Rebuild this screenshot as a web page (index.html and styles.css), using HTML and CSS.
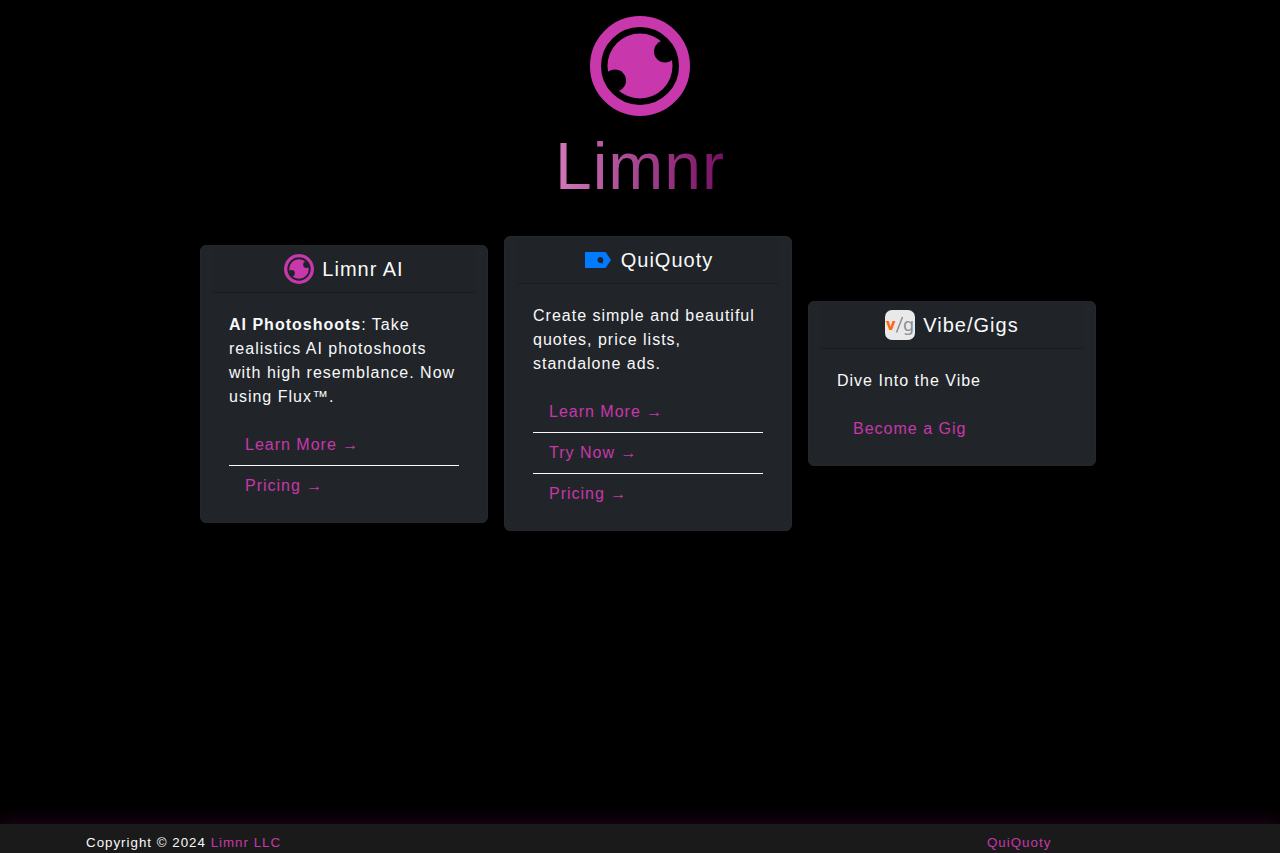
FILE: index.html
```html
<!DOCTYPE html>
<html lang="en">
<head>
    <meta charset="UTF-8">
    <meta name="viewport" content="width=device-width, initial-scale=1.0">
    <title>Limnr</title>
    <link rel="stylesheet" href="styles.css">
</head>
<body>
    <header class="hero">
        <svg class="logo" viewBox="0 0 100 100" aria-hidden="true">
            <defs>
                <mask id="bites">
                    <rect width="100" height="100" fill="#fff"/>
                    <circle cx="75" cy="35.5" r="11" fill="#000"/>
                    <circle cx="25" cy="64.5" r="11" fill="#000"/>
                </mask>
            </defs>
            <circle cx="50" cy="50" r="44.5" fill="none" stroke="#c837ab" stroke-width="11"/>
            <circle cx="50" cy="50" r="32.5" fill="#c837ab" mask="url(#bites)"/>
        </svg>
        <h1>Limnr</h1>
    </header>

    <main class="cards">
        <section class="card">
            <h2 class="card-header">
                <svg class="card-icon" viewBox="0 0 100 100" aria-hidden="true">
                    <circle cx="50" cy="50" r="44.5" fill="none" stroke="#c837ab" stroke-width="11"/>
                    <circle cx="50" cy="50" r="32.5" fill="#c837ab" mask="url(#bites)"/>
                </svg>
                Limnr AI
            </h2>
            <div class="card-body">
                <p><strong>AI Photoshoots</strong>: Take realistics AI photoshoots with high resemblance. Now using Flux™.</p>
                <ul class="links">
                    <li><a href="#">Learn More →</a></li>
                    <li><a href="#">Pricing →</a></li>
                </ul>
            </div>
        </section>

        <section class="card">
            <h2 class="card-header">
                <svg class="card-icon" viewBox="0 0 30 30" aria-hidden="true">
                    <path d="M2 7h20.500l5.500 8-5.500 8H2z" fill="#007bff"/>
                    <path d="M17.500 12a3 3 0 1 0 .8 5.900l1.400 1.200v-2.200a3 3 0 0 0-2.200-4.900z" fill="#212529"/>
                </svg>
                QuiQuoty
            </h2>
            <div class="card-body">
                <p>Create simple and beautiful quotes, price lists, standalone ads.</p>
                <ul class="links">
                    <li><a href="#">Learn More →</a></li>
                    <li><a href="#">Try Now →</a></li>
                    <li><a href="#">Pricing →</a></li>
                </ul>
            </div>
        </section>

        <section class="card">
            <h2 class="card-header">
                <svg class="card-icon" viewBox="0 0 30 30" aria-hidden="true">
                    <rect width="30" height="30" rx="7" fill="#e9e9e9"/>
                    <text class="icon-v" x="1" y="20">v</text>
                    <path d="M17.500 7l-6 15.500" stroke="#868e96" stroke-width="1.500"/>
                    <text class="icon-g" x="18" y="21">g</text>
                </svg>
                Vibe/Gigs
            </h2>
            <div class="card-body">
                <p>Dive Into the Vibe</p>
                <ul class="links">
                    <li><a href="#">Become a Gig</a></li>
                </ul>
            </div>
        </section>
    </main>

    <footer class="footer">
        <div class="footer-inner">
            <div>Copyright © 2024 <a href="#">Limnr LLC</a></div>
            <div><a href="#">QuiQuoty</a></div>
        </div>
    </footer>
</body>
</html>
```
FILE: styles.css
```css
* {
    box-sizing: border-box;
}
body {
    display: flex;
    flex-direction: column;
    min-height: 100vh;
    margin: 0;
    background-color: #000;
    color: #f8f9fa;
    font-family: "Liberation Sans", Arial, sans-serif;
    font-size: 16px;
    line-height: 24px;
    letter-spacing: 1px;
}
a {
    color: #c837ab;
    text-decoration: none;
}
.hero {
    display: flex;
    flex-direction: column;
    align-items: center;
    padding-top: 16px;
}
.logo {
    width: 100px;
    height: 100px;
}
h1 {
    margin: 10px 0 30px;
    font-size: 66px;
    font-weight: 400;
    line-height: 80px;
    background: linear-gradient(to right, #d279bb, #760f62);
    -webkit-background-clip: text;
    background-clip: text;
    color: transparent;
}
.cards {
    display: flex;
    flex-wrap: wrap;
    align-items: center;
    justify-content: center;
    margin-bottom: 16px;
}
.card {
    width: 288px;
    margin-left: 16px;
    padding: 0 12px;
    background-color: #212529;
    border: 1px solid #24282c;
    border-radius: 6px;
}
.card-header {
    display: flex;
    align-items: center;
    justify-content: center;
    gap: 8px;
    margin: 0;
    padding: 8px 16px;
    font-size: 20px;
    font-weight: 400;
    background-color: #202428;
    border-bottom: 1px solid #1a1d20;
}
.card-icon {
    width: 30px;
    height: 30px;
}
.icon-v,
.icon-g {
    font-family: "Noto Sans", sans-serif;
    font-size: 18px;
    letter-spacing: 0;
    fill: #868e96;
}
.icon-v {
    font-weight: 800;
    font-size: 16px;
    fill: #fd6a0d;
}
.card-body {
    padding: 20px 16px 16px;
}
.card-body p {
    margin: 0 0 16px;
}
.links {
    margin: 0;
    padding: 0;
    list-style: none;
}
.links li {
    padding: 8px 16px;
}
.links li + li {
    border-top: 1px solid #f8f9fa;
}
.footer {
    margin-top: auto;
    background-color: #1a1a1a;
    box-shadow: 0 0 20px #2b0524;
    font-size: smaller;
    line-height: 20px;
}
.footer-inner {
    display: grid;
    grid-template-columns: 1fr 207px;
    max-width: 1140px;
    margin: 0 auto;
    padding: 9px 16px 0;
}
```
